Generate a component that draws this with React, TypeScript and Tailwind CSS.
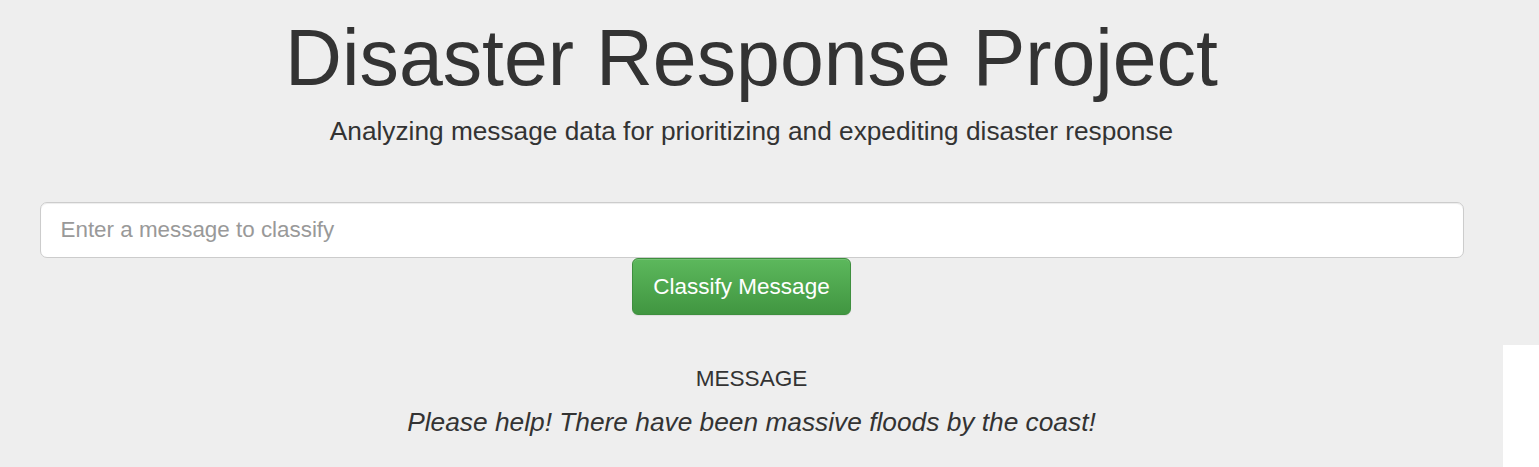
export default function App() {
  return (
    <div className="w-[1539px] bg-white font-['Liberation_Sans',Arial,sans-serif] text-[#333]">
      {/* jumbotron */}
      <div className="bg-[#eeeeee] h-[345px]">
        <div className="w-[1503px] flex flex-col items-center">
          <h1 className="mt-[15px] text-[78.8px] leading-[1.1] font-normal">Disaster Response Project</h1>
          <p className="mt-[11px] text-[26.25px] leading-[1.4]">
            Analyzing message data for prioritizing and expediting disaster response
          </p>
          <input
            type="text"
            placeholder="Enter a message to classify"
            className="mt-[53px] w-[1424px] h-[56px] rounded-[7px] border border-[#cccccc] bg-white px-[20px] text-[22.4px] text-[#555] placeholder:text-[#999] shadow-[inset_0_1px_1px_rgba(0,0,0,0.075)] outline-none"
          />
          <button
            type="button"
            className="mr-[20px] w-[219px] h-[57px] rounded-[6px] border border-[#3e8f3e] bg-gradient-to-b from-[#5cb85c] to-[#419641] text-[22.5px] text-white shadow-[inset_0_1px_0_rgba(255,255,255,0.15),0_1px_1px_rgba(0,0,0,0.075)]"
          >
            Classify Message
          </button>
        </div>
      </div>
      {/* result area */}
      <div className="w-[1503px] bg-[#eeeeee] h-[122px] flex flex-col items-center">
        <h4 className="mt-[22px] text-[22.6px] leading-[1.1]">MESSAGE</h4>
        <p className="mt-[16px] text-[26.3px] leading-[1.1] italic">
          Please help! There have been massive floods by the coast!
        </p>
      </div>
    </div>
  );
}
